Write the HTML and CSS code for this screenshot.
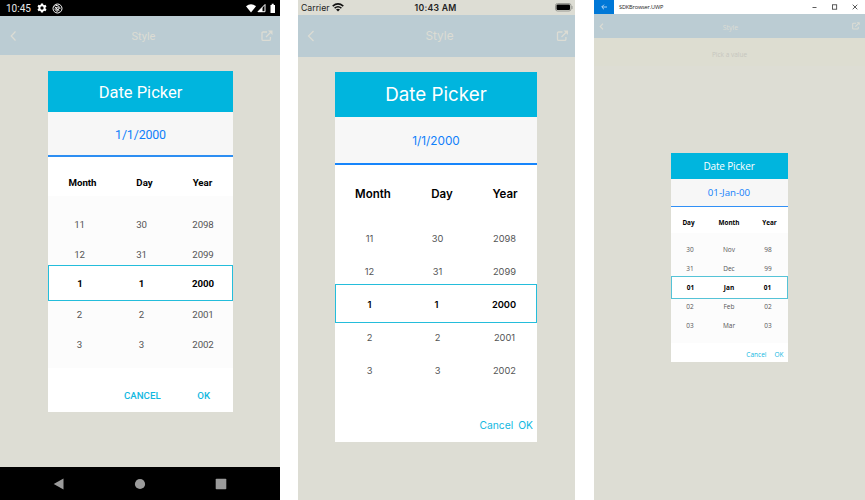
FILE: index.html
```
<!DOCTYPE html>
<html lang="en">
<head>
<meta charset="utf-8">
<title>Date Picker</title>
<link rel="stylesheet" href="styles.css">
</head>
<body>
<section class="screen android">
  <div class="status">
    <span class="clock">10:45</span>
    <svg class="gear" width="10" height="10" viewBox="0 0 24 24"><path fill="#fff" fill-rule="evenodd" d="M9.5 1h5l.7 3.2 2 1.1 3.1-1 2.5 4.3-2.4 2.2v2.4l2.4 2.2-2.5 4.3-3.1-1-2 1.1-.7 3.2h-5l-.7-3.2-2-1.1-3.1 1-2.5-4.3 2.4-2.2v-2.4L1.200 8.600 3.700 4.300l3.100 1 2-1.100zM12 8a4 4 0 1 0 0 8 4 4 0 0 0 0-8z"/></svg>
    <svg class="ring" width="11" height="11" viewBox="0 0 22 22" fill="none" stroke="#fff" stroke-width="2"><circle cx="11" cy="11" r="9"/><path d="M5 7l10 9M7 5c6-1 9 3 9 7M6 11c0 4 3 6 6 5"/><circle cx="11" cy="11" r="2.500"/></svg>
    <svg class="signals" width="31" height="11" viewBox="0 0 31 11"><path fill="#fff" d="M0 3.200Q5 -.8 10 3.200L5 9.500z"/><path fill="none" stroke="#fff" d="M12 8.700L19 1.500v7.200z"/><path fill="#fff" d="M11.500 9l5-5v5zM24.500 2h1.200V.8h2V2h1.300v8h-4.500z"/></svg>
  </div>
  <div class="nav">
    <svg width="8" height="12" viewBox="0 0 8 12"><path d="M5.500 1.500L1.200 6l4.300 4.500" fill="none" stroke="#dcdcd4" stroke-width="1.200"/></svg>
    <span class="nav-title">Style</span>
    <svg width="12" height="12" viewBox="0 0 12 12"><path d="M6 2H2.200Q1 2 1 3.200v6Q1 10.400 2.200 10.400h6Q9.400 10.400 9.400 9.200V7M5 7l5-5" fill="none" stroke="#dcdcd4" stroke-width="1.300"/><path d="M7 .5h4.500V5z" fill="#dcdcd4"/></svg>
  </div>
  <main class="stage">
    <div class="dialog">
      <h1>Date Picker</h1>
      <div class="value">1/1/2000</div>
      <div class="heads"><span>Month</span><span>Day</span><span>Year</span></div>
      <div class="wheel">
        <div class="row"><span>11</span><span>30</span><span>2098</span></div>
        <div class="row"><span>12</span><span>31</span><span>2099</span></div>
        <div class="row selected"><span>1</span><span>1</span><span>2000</span></div>
        <div class="row"><span>2</span><span>2</span><span>2001</span></div>
        <div class="row"><span>3</span><span>3</span><span>2002</span></div>
      </div>
      <div class="actions"><span>CANCEL</span><span>OK</span></div>
    </div>
  </main>
  <div class="softkeys">
    <svg width="12" height="12" viewBox="0 0 12 12"><path d="M.7 6L10.500 .4v11.200z" fill="#9b9b9b"/></svg>
    <svg width="12" height="12" viewBox="0 0 12 12"><circle cx="6" cy="6" r="5.100" fill="#9b9b9b"/></svg>
    <svg width="12" height="12" viewBox="0 0 12 12"><rect x=".7" y=".7" width="10.600" height="10.600" rx=".8" fill="#9b9b9b"/></svg>
  </div>
</section>

<section class="screen ios">
  <div class="status">
    <span class="carrier">Carrier</span>
    <svg class="wifi" width="12" height="9" viewBox="0 0 12 9" fill="none" stroke="#111"><path d="M.7 3.100Q6-1.300 11.300 3.100" stroke-width="1.600"/><path d="M2.600 5.100Q6 2.300 9.400 5.100" stroke-width="1.500"/><path d="M4 6.500Q6 5 8 6.500L6 8.600z" fill="#111" stroke="none"/></svg>
    <span class="clock">10:43 AM</span>
    <svg class="battery" width="18" height="9" viewBox="0 0 18 9"><rect x=".5" y=".5" width="15.500" height="7.500" rx="2" fill="none" stroke="#999a94"/><rect x="1.500" y="1.500" width="13.500" height="5.500" rx="1" fill="#000"/><path d="M17 3v3" stroke="#999a94"/></svg>
  </div>
  <div class="nav">
    <svg width="8" height="12" viewBox="0 0 8 12"><path d="M6.500 1L1.500 6l5 5" fill="none" stroke="#dcdcd4" stroke-width="1.200"/></svg>
    <span class="nav-title">Style</span>
    <svg width="13" height="12" viewBox="0 0 12 12"><path d="M6 2H2.200Q1 2 1 3.200v6Q1 10.400 2.200 10.400h6Q9.400 10.400 9.400 9.200V7M5 7l5-5" fill="none" stroke="#dcdcd4" stroke-width="1.300"/><path d="M7 .5h4.500V5z" fill="#dcdcd4"/></svg>
  </div>
  <main class="stage">
    <div class="dialog">
      <h1>Date Picker</h1>
      <div class="value">1/1/2000</div>
      <div class="heads"><span>Month</span><span>Day</span><span>Year</span></div>
      <div class="wheel">
        <div class="row"><span>11</span><span>30</span><span>2098</span></div>
        <div class="row"><span>12</span><span>31</span><span>2099</span></div>
        <div class="row selected"><span>1</span><span>1</span><span>2000</span></div>
        <div class="row"><span>2</span><span>2</span><span>2001</span></div>
        <div class="row"><span>3</span><span>3</span><span>2002</span></div>
      </div>
      <div class="actions"><span>Cancel</span><span>OK</span></div>
    </div>
  </main>
</section>

<section class="screen windows">
  <div class="status">
    <span class="back"><svg width="6" height="6" viewBox="0 0 6 6"><path d="M6 3H1M3 .7L.7 3 3 5.300" fill="none" stroke="#d5e9fa" stroke-width=".8"/></svg></span>
    <span class="app-name">SDKBrowser.UWP</span>
    <svg class="controls" width="46" height="6" viewBox="0 0 46 6" fill="none" stroke="#333" stroke-width=".8"><path d="M.5 3.500h4M40.700.7l4.600 4.600m0-4.600l-4.600 4.600"/><rect x="20.500" y=".8" width="4.200" height="4.400"/></svg>
  </div>
  <div class="nav">
    <svg width="5" height="7" viewBox="0 0 5 7"><path d="M4 .7L1.200 3.500 4 6.300" fill="none" stroke="#dcdcd4" stroke-width="1.100"/></svg>
    <span class="nav-title">Style</span>
    <svg width="8" height="8" viewBox="0 0 12 12"><path d="M6 2H2.200Q1 2 1 3.200v6Q1 10.400 2.200 10.400h6Q9.400 10.400 9.400 9.200V7M5 7l5-5" fill="none" stroke="#dcdcd4" stroke-width="1.600"/><path d="M7 .5h4.500V5z" fill="#dcdcd4"/></svg>
  </div>
  <div class="prompt">Pick a value</div>
  <main class="stage">
    <div class="dialog">
      <h1>Date Picker</h1>
      <div class="value">01-Jan-00</div>
      <div class="heads"><span>Day</span><span>Month</span><span>Year</span></div>
      <div class="wheel">
        <div class="row"><span>30</span><span>Nov</span><span>98</span></div>
        <div class="row"><span>31</span><span>Dec</span><span>99</span></div>
        <div class="row selected"><span>01</span><span>Jan</span><span>01</span></div>
        <div class="row"><span>02</span><span>Feb</span><span>02</span></div>
        <div class="row"><span>03</span><span>Mar</span><span>03</span></div>
      </div>
      <div class="actions"><span>Cancel</span><span>OK</span></div>
    </div>
  </main>
</section>
</body>
</html>
```
FILE: styles.css
```
* { box-sizing: border-box; }
body {
  margin: 0;
  width: 865px;
  height: 500px;
  display: flex;
  background: #fff;
  overflow: hidden;
}
svg { display: block; flex: none; }
.screen {
  height: 500px;
  display: flex;
  flex-direction: column;
  flex: none;
  background: #ddddd4;
  white-space: nowrap;
}
.status, .nav { display: flex; align-items: center; flex: none; }
.nav { justify-content: space-between; background: #bbccd3; color: #dcdcd4; }
.stage { flex: 1; display: flex; justify-content: center; align-items: flex-start; }
.dialog { display: flex; flex-direction: column; background: #fff; }
h1 {
  margin: 0;
  flex: none;
  display: flex;
  align-items: center;
  justify-content: center;
  background: #00b5de;
  color: #fff;
  font-weight: 400;
}
.value {
  flex: none;
  display: flex;
  align-items: center;
  justify-content: center;
  background: #f7f7f7;
  color: #1080fa;
}
.heads, .row { display: grid; align-items: center; text-align: center; }
.heads { color: #000; font-weight: 700; }
.wheel { display: flex; flex-direction: column; }
.row { color: #555; }
.row.selected { color: #000; font-weight: 700; border: 1px solid #24bddb; background: #fff; }
.actions { flex: 1; display: flex; align-items: center; color: #12b8df; }

/* Android */
.android { width: 280px; margin-right: 18px; font-family: Roboto, sans-serif; }
.android .status { height: 16px; background: #000; color: #e8e8e8; padding: 0 3px 0 6px; }
.android .clock { font-size: 10px; width: 31px; padding-top: 1px; }
.android .gear { margin-right: 5px; }
.android .signals { margin-left: auto; }
.android .nav { height: 39px; padding: 0 7px 0 10px; font-size: 11px; }
.android .nav-title { padding: 1px 0 0 8px; }
.android .stage { padding: 16px 0 0 1px; }
.android .dialog { width: 185px; height: 341px; }
.android h1 { height: 41px; font-size: 16.500px; padding-top: 1px; }
.android .value { height: 45px; font-size: 12.400px; letter-spacing: -.15px; border-bottom: 2px solid #2d8ef2; padding-top: 2px; }
.android .heads { height: 39px; padding-top: 11px; font-size: 9.700px; grid-template-columns: 69px 55px 61px; }
.android .wheel { background: #fcfcfc; padding: 13px 0 9px; }
.android .row { height: 30px; grid-template-columns: 63px 61px 62px; font-size: 9.700px; letter-spacing: -.1px; }
.android .row.selected { height: 36px; margin: -4px 0 -2px; padding-top: 1px; grid-template-columns: 62px 61px 62px; }
.android .actions { font-size: 9.700px; font-weight: 500; padding: 11px 23px 0 76px; justify-content: space-between; }
.android .softkeys { height: 33px; background: #000; display: flex; align-items: center; justify-content: space-between; padding: 0 53px; }

/* iOS */
.ios { width: 277px; margin-right: 19px; font-family: Inter, sans-serif; }
.ios .status { height: 15px; color: #222; font-size: 8.700px; padding: 0 2px 0 3px; }
.ios .wifi { margin-left: 3px; }
.ios .clock { font-weight: 600; margin-left: 70px; letter-spacing: .25px; }
.ios .battery { margin-left: auto; }
.ios .nav { height: 42px; padding: 0 6px 0 9px; font-size: 11.800px; }
.ios .nav-title { padding: 0 0 1px 8px; }
.ios .stage { padding-top: 15px; }
.ios .dialog { width: 202px; height: 370px; margin-right: 1px; }
.ios h1 { height: 45px; font-size: 18.800px; }
.ios .value { height: 48px; font-size: 11.800px; border-bottom: 2px solid #1685fb; padding-top: 2px; }
.ios .heads { height: 57px; font-size: 11.500px; font-weight: 600; grid-template-columns: 76px 62px 64px; padding-left: 0; }
.ios .row { height: 33px; grid-template-columns: 69px 67px 67px; font-size: 9.300px; }
.ios .row.selected { height: 39px; margin: -4px 0 -2px; padding-top: 1px; font-weight: 600; grid-template-columns: 67px 67px 68px; }
.ios .actions { font-size: 10.300px; justify-content: flex-end; gap: 5px; padding: 21px 4px 0 0; }

/* Windows */
.windows { width: 271px; font-family: "Open Sans", sans-serif; }
.windows .status { height: 14px; background: #fff; color: #222; font-size: 5.600px; letter-spacing: -.15px; padding-right: 7px; }
.windows .back { width: 20px; height: 14px; background: #0078d7; display: flex; align-items: center; justify-content: center; }
.windows .app-name { margin-left: 5px; }
.windows .controls { margin-left: auto; }
.windows .nav { height: 24px; padding: 0 5px; font-size: 7px; }
.windows .nav-title { padding: 2px 0 0 5px; }
.windows .prompt { height: 28px; padding: 4px 0 0; display: flex; align-items: center; justify-content: center; font-size: 6.500px; background: #ddddd1; color: #c6c6be; }
.windows .stage { padding-top: 86.500px; }
.windows .dialog { width: 117px; height: 209px; margin-right: 1px; }
.windows h1 { height: 26px; font-size: 10px; letter-spacing: -.15px; padding-top: 1px; }
.windows .value { height: 28px; font-size: 9.700px; border-bottom: 1.500px solid #3190f6; }
.windows .heads { height: 26px; font-size: 6.400px; padding-top: 6px; grid-template-columns: 36px 45px 36px; }
.windows .wheel { background: #fcfcfc; padding: 7px 0 8px; }
.windows .row { height: 19px; font-size: 6.500px; grid-template-columns: 39px 39px 39px; }
.windows .row.selected { height: 23px; margin: -2px 0; border-color: #55c3d7; grid-template-columns: 38px 39px 38px; }
.windows .actions { font-size: 6.500px; justify-content: flex-end; gap: 8px; padding: 5px 4px 0 0; }
```
